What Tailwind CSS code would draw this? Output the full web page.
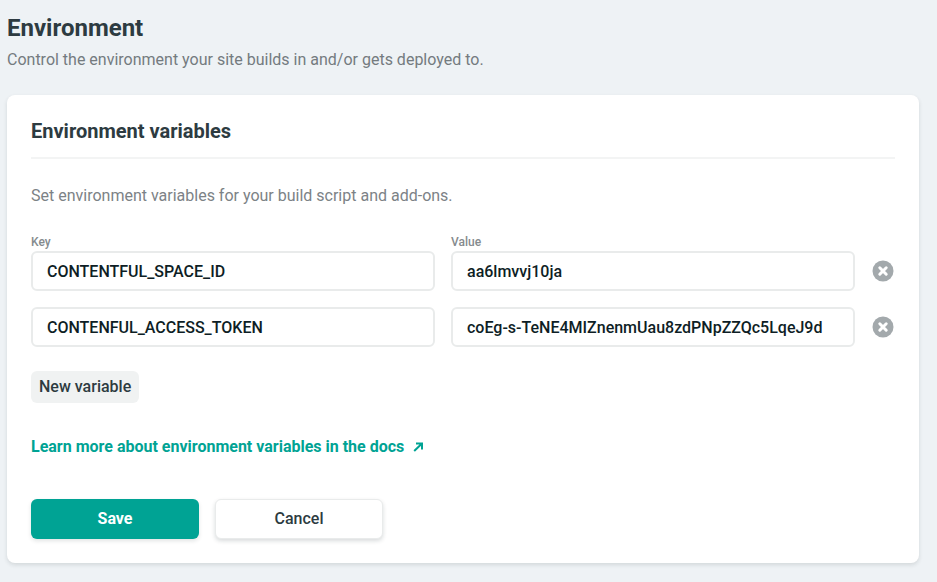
<!DOCTYPE html>
<html lang="en">
<head>
<meta charset="utf-8">
<meta name="viewport" content="width=device-width, initial-scale=1">
<title>Environment</title>
<script src="https://cdn.jsdelivr.net/npm/@tailwindcss/browser@4"></script>
</head>
<body class="min-h-screen bg-[#eef2f5] pt-3 pr-[18px] pb-4 pl-[7px] font-[Roboto,'Liberation_Sans',sans-serif] text-base text-[#2d3b41]">
<main>
  <header class="mb-[23px]">
    <h1 class="text-2xl leading-8 font-bold">Environment</h1>
    <p class="pt-1 leading-6 text-[#747b7f]">Control the environment your site builds in and/or gets deployed to.</p>
  </header>
  <section class="rounded-lg bg-white p-6 shadow-[0_2px_4px_0_rgba(14,30,37,0.12)]">
    <h2 class="border-b-2 border-[#f3f4f4] pb-[14px] text-xl leading-6 font-bold">Environment variables</h2>
    <p class="pt-[25px] leading-6 text-[#7c8286]">Set environment variables for your build script and add-ons.</p>
    <form>
      <div class="mt-[26px] grid grid-cols-[1fr_1fr_24px] items-center gap-x-4">
        <label for="key-1" class="pb-px text-xs leading-4 font-medium text-[#858b8e]">Key</label>
        <label for="value-1" class="col-span-2 pb-px text-xs leading-4 font-medium text-[#858b8e]">Value</label>
        <input id="key-1" type="text" value="CONTENTFUL_SPACE_ID" class="h-10 w-full min-w-0 rounded-md border-2 border-[#e9ebeb] bg-white px-[14px] font-medium text-[#0e1e25]">
        <input id="value-1" type="text" value="aa6lmvvj10ja" class="h-10 w-full min-w-0 rounded-md border-2 border-[#e9ebeb] bg-white px-[14px] font-medium text-[#0e1e25]">
        <button type="button" aria-label="Delete CONTENTFUL_SPACE_ID" class="flex size-6 items-center justify-center">
          <svg class="size-6" viewBox="0 0 24 24" fill="none" aria-hidden="true"><circle cx="12" cy="12" r="10.5" fill="#a3a9ac"/><path d="M8.8 8.8l6.4 6.4M15.2 8.8l-6.4 6.4" stroke="#fff" stroke-width="3" stroke-linecap="round"/></svg>
        </button>
        <input id="key-2" type="text" aria-label="Key" value="CONTENFUL_ACCESS_TOKEN" class="mt-4 h-10 w-full min-w-0 rounded-md border-2 border-[#e9ebeb] bg-white px-[14px] font-medium text-[#0e1e25]">
        <input id="value-2" type="text" aria-label="Value" value="coEg-s-TeNE4MIZnenmUau8zdPNpZZQc5LqeJ9d" class="mt-4 h-10 w-full min-w-0 rounded-md border-2 border-[#e9ebeb] bg-white px-[14px] font-medium text-[#0e1e25]">
        <button type="button" aria-label="Delete CONTENFUL_ACCESS_TOKEN" class="mt-4 flex size-6 items-center justify-center">
          <svg class="size-6" viewBox="0 0 24 24" fill="none" aria-hidden="true"><circle cx="12" cy="12" r="10.5" fill="#a3a9ac"/><path d="M8.8 8.8l6.4 6.4M15.2 8.8l-6.4 6.4" stroke="#fff" stroke-width="3" stroke-linecap="round"/></svg>
        </button>
      </div>
      <button type="button" class="mt-6 block h-8 rounded-md bg-[#f0f2f2] px-2 font-medium">New variable</button>
      <p class="mt-8 leading-6"><a href="#docs" class="flex w-fit items-center gap-2 font-bold text-[#00a394]">Learn more about environment variables in the docs
        <svg class="size-3" viewBox="0 0 12 12" fill="none" stroke="currentColor" stroke-width="2" aria-hidden="true"><path d="M4 2.5h6v6M10 2.5L2.2 10"/></svg></a></p>
      <div class="mt-10 flex gap-4">
        <button type="submit" class="h-10 w-42 rounded-md bg-[#00a394] font-bold text-white shadow-[0_2px_4px_0_rgba(14,30,37,0.12)]">Save</button>
        <button type="button" class="h-10 w-42 rounded-md border border-[#e9ebeb] bg-white font-medium shadow-[0_2px_4px_0_rgba(14,30,37,0.16)]">Cancel</button>
      </div>
    </form>
  </section>
</main>
</body>
</html>
